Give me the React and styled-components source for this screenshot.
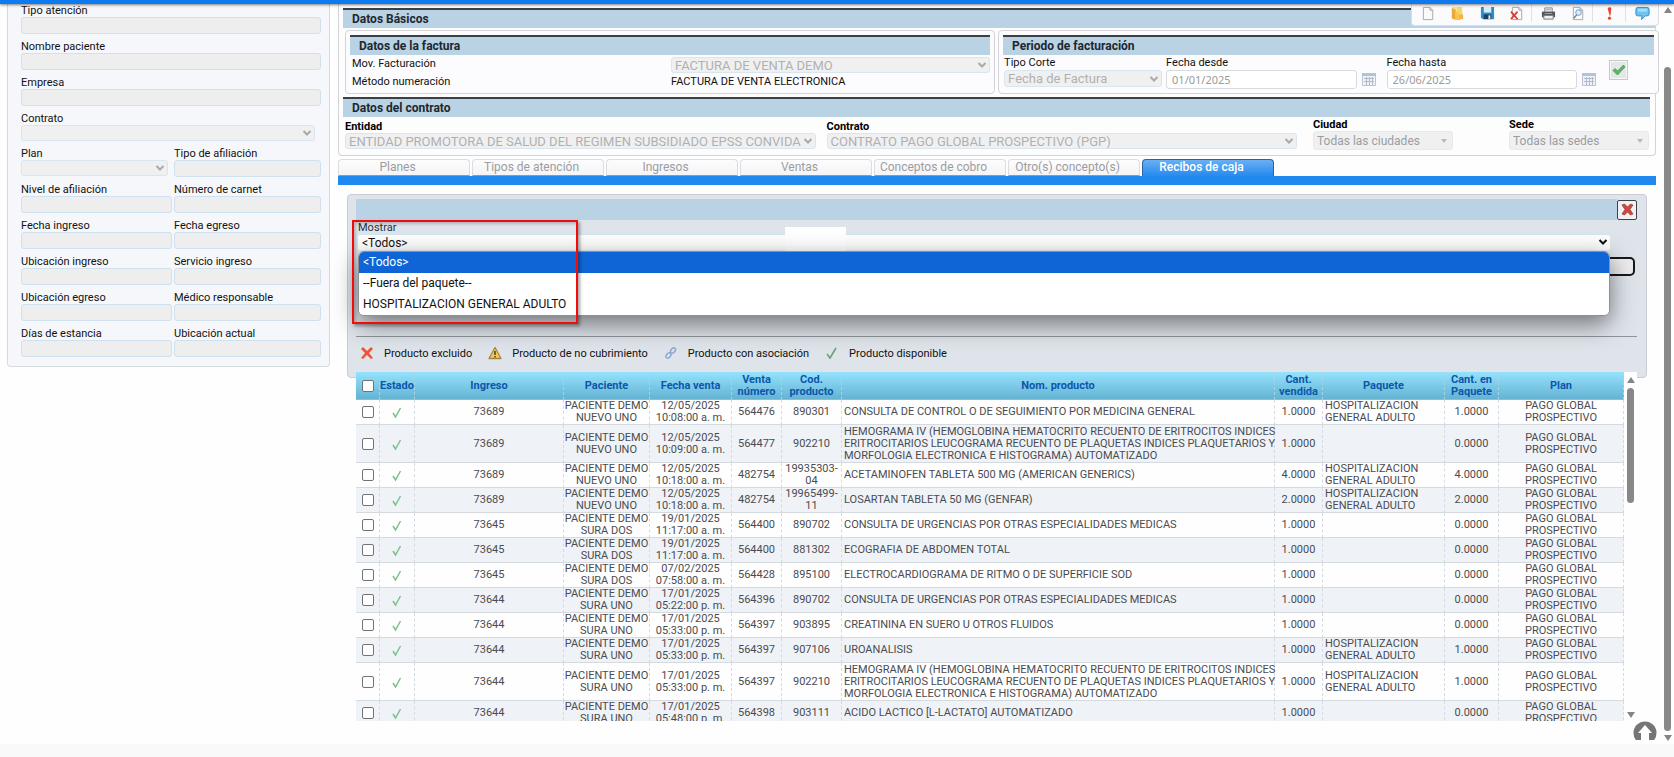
import React from "react";
import styled, { createGlobalStyle, css } from "styled-components";

const Global = createGlobalStyle`
  * { box-sizing: border-box; }
  body { margin: 0; background: #f9f9fa; font-family: Roboto, "Liberation Sans", sans-serif; font-size: 11px; color: #111; }
  input, select, button { font-family: inherit; margin: 0; }
  svg { display: block; flex: none; }
`;

const Page = styled.div`
  position: relative;
  min-height: 100vh;
  display: flex;
  flex-direction: column;
`;
const TopBar = styled.header`
  position: relative;
  z-index: 5;
  height: 4px;
  background: #0d7af0;
  box-shadow: 0 1px 3px rgba(0, 0, 0, 0.5);
`;
const Body = styled.div`
  flex: 1;
  display: flex;
  align-items: flex-start;
  background: #fefefe;
  position: relative;
`;
const Footer = styled.footer`
  height: 13px;
  background: #f9f9fa;
`;

/* Patient panel */
const PatientPanel = styled.aside`
  flex: none;
  width: 323px;
  margin: 0 8px 0 7px;
  padding: 0 8px 9px 13px;
  border: 1px solid #d6d9dd;
  border-top: 0;
  border-radius: 0 0 4px 4px;
  background: #f6f7fa;
  display: grid;
  grid-template-columns: 151px 147px;
  gap: 6px 2px;
`;
const Field = styled.label`
  grid-column: ${(p) => (p.$wide ? "1 / -1" : "auto")};
  display: flex;
  flex-direction: column;
  line-height: 13px;
  font-size: 11px;
`;
const PatientInput = styled.input`
  width: 100%;
  height: 17px;
  padding: 0 4px;
  border: 1px solid #cfe0ee;
  border-radius: 3px;
  background: #eeeeee;
`;

/* Select boxes */
const SelectBox = styled.span`
  position: relative;
  display: block;
  width: ${(p) => p.$width || "100%"};
  svg { position: absolute; right: ${(p) => (p.$caret ? "5px" : "3px")}; top: 50%; margin-top: -4px; pointer-events: none; }
`;
const SelectControl = styled.select`
  appearance: none;
  display: block;
  width: 100%;
  height: ${(p) => p.$height || "16px"};
  padding: 0 12px 0 3px;
  border: 1px solid ${(p) => (p.$caret ? "#e9e9ec" : "#d9e6ef")};
  border-radius: 3px;
  background: #f0f0f1;
  color: ${(p) => (p.$caret ? "#9a9da3" : "#b0b0b0")};
  font-size: ${(p) => p.$size || "13px"};
  opacity: 1;
`;

const Chevron = ({ color = "#a9a9a9" }) => (
  <svg width="10" height="8" viewBox="0 0 10 8" fill="none" stroke={color} strokeWidth="2">
    <path d="M1.5 2 5 5.5 8.5 2" />
  </svg>
);
const Caret = () => (
  <svg width="8" height="8" viewBox="0 0 8 8" fill="#b9b9bd"><path d="M1 2h6L4 6z" /></svg>
);
function Select({ value, width, height, size, caret, label }) {
  return (
    <SelectBox $width={width} $caret={caret}>
      <SelectControl disabled $height={height} $size={size} $caret={caret} aria-label={label} defaultValue={value}>
        <option>{value}</option>
      </SelectControl>
      {caret ? <Caret /> : <Chevron />}
    </SelectBox>
  );
}

/* Invoice area */
const Main = styled.main`
  flex: 1;
  min-width: 0;
`;
const BasicData = styled.section`
  margin-right: 5px;
  padding: 4px 0 5px 4px;
  border: 1px solid #d4d4d8;
  border-top: 0;
  border-radius: 0 0 4px 4px;
  background: #fdfdfe;
`;
const BarTitle = styled.h2`
  margin: 0 ${(p) => p.$right || "0"} 0 0;
  height: 20px;
  padding-left: 9px;
  border-top: 2px solid #3b4046;
  background: #b9d3e4;
  font-size: 12px;
  line-height: 19px;
  font-weight: 700;
  color: #1d2730;
`;
const CardRow = styled.div`
  display: flex;
  gap: 3px;
  margin: 2px -4px 3px 2px;
`;
const Card = styled.section`
  flex: ${(p) => p.$grow} 1 0;
  min-width: 0;
  height: 64px;
  padding: 4px;
  border: 1px solid #d4d4d8;
  border-radius: 4px;
  background: #fcfcfe;
`;
const InvoiceGrid = styled.div`
  display: grid;
  grid-template-columns: 1fr 1fr;
  grid-template-rows: 18px 18px;
  padding-left: 2px;
  font-size: 11px;
  line-height: 17px;
`;
const InvoiceSelect = styled.div`padding-top: 2px;`;
const PeriodRow = styled.div`
  display: flex;
  padding: 1px 26px 0 1px;
`;
const PeriodField = styled.label`
  flex: ${(p) => p.$flex};
  min-width: 0;
  font-size: 11px;
  line-height: 14px;
`;
const DateInput = styled.input`
  display: block;
  width: 100%;
  height: 19px;
  padding: 0 5px;
  border: 1px solid #d9dadd;
  border-radius: 3px;
  background: #fff;
  color: #9b9b9b;
  font-family: "Noto Sans", sans-serif;
  font-size: 11px;
`;
const IconButton = styled.button`
  flex: none;
  display: grid;
  place-items: center;
  padding: 0;
  border: 0;
  background: none;
`;
const CalendarButton = styled(IconButton)`
  width: 14px;
  height: 14px;
  margin: 16px 11px 0 5px;
`;
const AcceptButton = styled(IconButton)`
  width: 19px;
  height: 20px;
  margin: 4px 0 0 2px;
  border: 1px solid #c5c9ca;
  box-shadow: inset 0 0 0 1px #f7f7f7;
  background: #e4e7e7;
`;
const ContractRow = styled.div`
  display: flex;
  align-items: flex-start;
  padding: 1px 6px 0 2px;
`;
const ContractField = styled.label`
  flex: ${(p) => p.$flex};
  min-width: 0;
  margin-left: ${(p) => p.$left || "0"};
  padding-top: ${(p) => p.$top || "0"};
  font-size: 11px;
  font-weight: 700;
  line-height: 13px;
  color: #000;
`;

/* Tabs */
const Tabs = styled.nav`
  display: flex;
  gap: 2px;
  margin: 3px 5px 0 0;
  border-bottom: 9px solid #2089f0;
`;
const Tab = styled.button`
  height: 17px;
  flex: 0 1 132px;
  padding: 0 13px 0 0;
  border: 1px solid #dcdce0;
  border-bottom-color: #8c9bab;
  border-radius: 4px 4px 0 0;
  background: linear-gradient(#fdfdfe, #f4f4f6);
  color: #9c9ca0;
  font-size: 12px;
  line-height: 15px;
  white-space: nowrap;
  ${(p) =>
    p.$active &&
    css`
      border-color: #2a63a5;
      border-bottom-color: #2a8cef;
      background: linear-gradient(#6ab0f3, #2a8cef);
      color: #fff;
      font-weight: 500;
    `}
`;

/* Receipt panel */
const ReceiptPanel = styled.section`
  position: relative;
  z-index: 2;
  margin: 9px 14px 0 9px;
  height: 184px;
  padding: 4px 9px 0 8px;
  border: 1px solid #c9cdd3;
  border-radius: 4px;
  background: #dfe4eb;
`;
const PanelHead = styled.div`
  display: flex;
  align-items: center;
  height: 21px;
`;
const PanelBar = styled.div`
  flex: 1;
  height: 21px;
  background: #b9d3e4;
`;
const CloseButton = styled(IconButton)`
  width: 20px;
  height: 20px;
  border: 1px solid #3d4148;
  border-radius: 2px;
  background: #f1f1f4;
`;
const ShowField = styled.div`
  position: relative;
  margin: 0 27px 0 2px;
`;
const ShowLabel = styled.label`
  display: block;
  font-size: 11px;
  line-height: 15px;
  color: #26313b;
`;
const ShowSelect = styled.select`
  appearance: none;
  display: block;
  width: 100%;
  height: 15px;
  padding: 0 4px;
  border: 0;
  border-radius: 2px;
  box-shadow: 0 -1px #d2e6f2, 0 1px #e4eef5;
  background: #fdfdfd;
  color: #111;
  font-size: 12px;
`;
const ShowChevron = styled.span`
  position: absolute;
  right: 2px;
  top: 18px;
  pointer-events: none;
`;
const BlankPatch = styled.span`
  position: absolute;
  left: 34.1%;
  top: 7px;
  width: 61px;
  height: 24px;
  background: #fff;
`;
const Options = styled.ul`
  position: absolute;
  z-index: 3;
  top: 31px;
  left: 0;
  right: 0;
  margin: 0;
  padding: 0;
  list-style: none;
  border: 1px solid #8d9096;
  border-radius: 6px;
  background: #fff;
  overflow: hidden;
  box-shadow: 0 8px 24px rgba(0, 0, 0, 0.5);
`;
const Option = styled.li`
  height: 21px;
  padding-left: 4px;
  font-size: 12px;
  line-height: 21px;
  color: ${(p) => (p.$active ? "#fff" : "#111")};
  background: ${(p) => (p.$active ? "#0f64d6" : "#fff")};
`;
const Highlight = styled.div`
  position: absolute;
  z-index: 4;
  top: 0;
  left: -6px;
  width: 226px;
  height: 104px;
  border: 2px solid #f50a0a;
  box-shadow: 2px 2px 3px rgba(0, 0, 0, 0.35), inset 2px 2px 3px rgba(0, 0, 0, 0.2);
  pointer-events: none;
`;
const WideButton = styled.button`
  display: block;
  width: calc(100% - 4px);
  height: 19px;
  margin: 7px 0 60px 2px;
  border: 2px solid #16181b;
  border-radius: 5px;
  background: #ececee;
`;
const Legend = styled.div`
  display: flex;
  align-items: center;
  height: 33px;
  padding-left: 4px;
  border-top: 1px solid #8f949a;
`;
const LegendItem = styled.span`
  display: flex;
  align-items: center;
  gap: 10px;
  margin-right: 16px;
  font-size: 11px;
  color: #111;
`;

/* Product table */
const TableArea = styled.div`
  position: relative;
  z-index: 2;
  display: flex;
  height: calc(100vh - 408px);
  min-height: 120px;
  margin: -6px 24px 23px 18px;
  overflow: hidden;
  background: #fefefe;
`;
const TableClip = styled.div`
  flex: 1;
  min-width: 0;
  overflow: hidden;
`;
const Table = styled.table`
  width: 100%;
  table-layout: fixed;
  border-collapse: separate;
  border-spacing: 0;
`;
const Th = styled.th`
  height: 28px;
  padding: 0;
  border-right: 1px dashed #a9d3e4;
  border-bottom: 1px solid #a2b8c4;
  background: linear-gradient(#95e2fd, #64b3d2);
  color: #0b57ac;
  font-size: 11px;
  line-height: 12px;
  font-weight: 700;
`;
const Tr = styled.tr`
  height: ${(p) => (p.$tall ? "38px" : "25px")};
  background: ${(p) => (p.$odd ? "#eff3f8" : "#fefefe")};
`;
const Td = styled.td`
  padding: 0 0 0 ${(p) => (p.$left ? "2px" : "0")};
  border-right: 1px dashed #d3dbe0;
  border-bottom: 1px solid #d5dade;
  text-align: ${(p) => (p.$left ? "left" : "center")};
  color: #4b4b4f;
  font-size: 11px;
  line-height: 12px;
  white-space: pre;
  svg { margin: 0 auto; }
`;
const Check = styled.input`
  appearance: none;
  display: block;
  width: 12px;
  height: 12px;
  && { margin: 0 auto; }
  border: 1px solid #6f7378;
  border-radius: 2px;
  background: #fff;
`;

/* Scrollbars */
const Scroll = styled.div`
  flex: none;
  align-self: stretch;
  width: 13px;
  display: flex;
  flex-direction: column;
  align-items: center;
  justify-content: space-between;
  padding: ${(p) => p.$pad};
`;
const Track = styled.div`
  flex: 1;
  width: 7px;
  padding-top: ${(p) => p.$offset};
  margin: 4px 0;
`;
const Thumb = styled.div`
  width: 7px;
  height: ${(p) => p.$height};
  border-radius: 4px;
  background: #888;
`;
const Arrow = ({ down }) => (
  <svg width="8" height="6" viewBox="0 0 8 6" fill="#858585">
    <path d={down ? "M0 0h8L4 6z" : "M0 6h8L4 0z"} />
  </svg>
);

const Toolbar = styled.div`
  position: absolute;
  z-index: 4;
  right: 15px;
  top: 0;
  width: 248px;
  height: 22px;
  display: flex;
  align-items: flex-start;
  padding-left: 1px;
  border: 1px solid #dedee2;
  border-top: 0;
  border-radius: 0 0 4px 4px;
  background: #fbfbfd;
`;
const ToolButton = styled(IconButton)`
  width: ${(p) => p.$width || "30px"};
  height: 18px;
  border-left: ${(p) => (p.$divided ? "1px solid #e2e2e6" : "0")};
`;
const TopLink = styled.a`
  position: absolute;
  z-index: 4;
  right: 17px;
  bottom: 4px;
  height: 19px;
  overflow: hidden;
`;

const page = <path d="M2.500 1.500h7l3 3v10h-10zM9.500 1.500v3h3" fill="#fafafa" stroke="#a5a5aa" />;
const TOOLS = [
  ["Nuevo", <>{page}</>, "31px"],
  ["Abrir", <><path d="M2 1h7l2 1v12H2z" fill="#fbe08e" /><path d="M8 1h5v9H8z" fill="#f9d36b" /><path d="M2 2l4 2v11l-4-2z" fill="#e8a93a" /><path d="M6 6h2l3 4v5H6z" fill="#f8c650" /><path d="M10 9h4v5h-4z" fill="#f1b540" /></>, "26px"],
  ["Guardar", <><path d="M1 1h14v13H3l-2-2z" fill="#2b8cc8" /><path d="M4 1h8v6H4z" fill="#dcecf6" /><path d="M4 9h8v5H4z" fill="#16415f" /><path d="M9 10h2v4H9z" fill="#e8eef2" /></>, "34px"],
  ["Eliminar", <>{page}<path d="M1 6l7 8M8 6l-7 8" stroke="#dc3b2a" strokeWidth="1.800" /></>, "27px"],
  ["Imprimir", <><path d="M4 2h8v5H4z" fill="#e9e9e9" stroke="#85898d" /><path d="M1 6h14v6H1z" fill="#50565b" /><path d="M3 10h10v4H3z" fill="#f0f0f0" stroke="#777" /><path d="M5 4h6M4 8h8" stroke="#9fa4a8" /></>, "33px", true],
  ["Vista previa", <>{page}<circle cx="8" cy="7" r="3" fill="#d8ecfa" stroke="#6c9cc4" /><path d="M6 9.500l-3 3.500" stroke="#6c7d8c" strokeWidth="1.500" /></>, "28px"],
  ["Alerta", <><path d="M6 2.500C7 1 10 1 10 3l-1 7H8z" fill="#e4492d" /><circle cx="8" cy="13" r="1.700" fill="#e4492d" /></>, "33px", true],
  ["Mensajes", <><path d="M3 1.500h10a2 2 0 0 1 2 2v5a2 2 0 0 1-2 2h-2l-4 4 .500-4H3a2 2 0 0 1-2-2v-5a2 2 0 0 1 2-2z" fill="#6cc3f2" stroke="#3488c0" /><path d="M3 3h10v3H3z" fill="#a6defa" /></>, "33px", true],
];

const Calendar = () => (
  <svg width="14" height="14" viewBox="0 0 14 14">
    <path d="M.5 1.500h13v12H.5z" fill="#eef2f8" stroke="#b9c4d4" />
    <path d="M0 1h14v3H0z" fill="#b4c2d6" />
    <path d="M2 6.500h10M2 9.500h10M4.500 5v8M7.500 5v8M10.500 5v8" stroke="#b0bccd" />
  </svg>
);
const Accept = () => (
  <svg width="14" height="14" viewBox="0 0 14 14"><path d="M1 7.500 3 5.500 5.500 8 11.500 2 13 4 5.500 12z" fill="#5cb85c" stroke="#3f8f48" strokeWidth=".7" /></svg>
);
const Close = () => (
  <svg width="13" height="13" viewBox="0 0 13 13"><path d="M1 2 3.500 1 6.500 4 9.500 1 12 2 9 6.500 12 11 9.500 12 6.500 9 3.500 12 1 11 4 6.500z" fill="#d2473d" stroke="#8c3a38" strokeWidth=".7" /></svg>
);
const Tick = () => (
  <svg width="12" height="14" viewBox="0 0 12 14" fill="none"><path d="M2 8l2.500 4L9.500 3" stroke="#7dc08c" strokeWidth="1.500" /></svg>
);
const LEGEND = [
  ["Producto excluido", <path d="M1 3l2-2 4 4 4-4 2 2-4 4 4 5-2 1-4-4-4 4-2-1 4-5z" fill="#f1533a" />],
  ["Producto de no cubrimiento", <><path d="M7 1.500 13 12.500H1z" fill="#fbc948" stroke="#a5844a" strokeLinejoin="round" strokeWidth="1.300" /><path d="M7 5v4M7 10v1.500" stroke="#4a3d20" strokeWidth="1.500" /></>],
  ["Producto con asociación", <g fill="none" stroke="#86a8d4" strokeWidth="1.500"><ellipse cx="4.500" cy="9.500" rx="2" ry="3" transform="rotate(40 4.500 9.500)" /><ellipse cx="9" cy="4.500" rx="2" ry="3" transform="rotate(40 9 4.500)" /></g>],
  ["Producto disponible", <path d="M2 8l3 4 6-10" fill="none" stroke="#6da279" strokeWidth="1.600" />],
];

const PATIENT = [
  ["Tipo atención", "wide"], ["Nombre paciente", "wide"], ["Empresa", "wide"], ["Contrato", "wide", "294px"],
  ["Plan", "", "147px"], ["Tipo de afiliación"], ["Nivel de afiliación"], ["Número de carnet"], ["Fecha ingreso"], ["Fecha egreso"],
  ["Ubicación ingreso"], ["Servicio ingreso"], ["Ubicación egreso"], ["Médico responsable"], ["Días de estancia"], ["Ubicación actual"],
];
const TABS = ["Planes", "Tipos de atención", "Ingresos", "Ventas", "Conceptos de cobro", "Otro(s) concepto(s)", "Recibos de caja"];
const COLUMNS = [
  ["", 24], ["Estado", 35], ["Ingreso", "149"], ["Paciente", 86], ["Fecha venta", 82], ["Venta\nnúmero", 50], ["Cod.\nproducto", 60],
  ["Nom. producto"], ["Cant.\nvendida", 48], ["Paquete", 122], ["Cant. en\nPaquete", 54], ["Plan", 125],
];
const HEMO = "HEMOGRAMA IV (HEMOGLOBINA HEMATOCRITO RECUENTO DE ERITROCITOS INDICES\nERITROCITARIOS LEUCOGRAMA RECUENTO DE PLAQUETAS INDICES PLAQUETARIOS Y\nMORFOLOGIA ELECTRONICA E HISTOGRAMA) AUTOMATIZADO";
const ROWS = [
  ["73689", "NUEVO UNO", "12/05/2025", "10:08:00 a. m.", "564476", "890301", "CONSULTA DE CONTROL O DE SEGUIMIENTO POR MEDICINA GENERAL", "1.0000", true, "1.0000"],
  ["73689", "NUEVO UNO", "12/05/2025", "10:09:00 a. m.", "564477", "902210", HEMO, "1.0000", false, "0.0000"],
  ["73689", "NUEVO UNO", "12/05/2025", "10:18:00 a. m.", "482754", "19935303-\n04", "ACETAMINOFEN TABLETA 500 MG (AMERICAN GENERICS)", "4.0000", true, "4.0000"],
  ["73689", "NUEVO UNO", "12/05/2025", "10:18:00 a. m.", "482754", "19965499-\n11", "LOSARTAN TABLETA 50 MG (GENFAR)", "2.0000", true, "2.0000"],
  ["73645", "SURA DOS", "19/01/2025", "11:17:00 a. m.", "564400", "890702", "CONSULTA DE URGENCIAS POR OTRAS ESPECIALIDADES MEDICAS", "1.0000", false, "0.0000"],
  ["73645", "SURA DOS", "19/01/2025", "11:17:00 a. m.", "564400", "881302", "ECOGRAFIA DE ABDOMEN TOTAL", "1.0000", false, "0.0000"],
  ["73645", "SURA DOS", "07/02/2025", "07:58:00 a. m.", "564428", "895100", "ELECTROCARDIOGRAMA DE RITMO O DE SUPERFICIE SOD", "1.0000", false, "0.0000"],
  ["73644", "SURA UNO", "17/01/2025", "05:22:00 p. m.", "564396", "890702", "CONSULTA DE URGENCIAS POR OTRAS ESPECIALIDADES MEDICAS", "1.0000", false, "0.0000"],
  ["73644", "SURA UNO", "17/01/2025", "05:33:00 p. m.", "564397", "903895", "CREATININA EN SUERO U OTROS FLUIDOS", "1.0000", false, "0.0000"],
  ["73644", "SURA UNO", "17/01/2025", "05:33:00 p. m.", "564397", "907106", "UROANALISIS", "1.0000", true, "1.0000"],
  ["73644", "SURA UNO", "17/01/2025", "05:33:00 p. m.", "564397", "902210", HEMO, "1.0000", true, "1.0000"],
  ["73644", "SURA UNO", "17/01/2025", "05:48:00 p. m.", "564398", "903111", "ACIDO LACTICO [L-LACTATO] AUTOMATIZADO", "1.0000", false, "0.0000"],
];

export default function App() {
  return (
    <Page>
      <Global />
      <TopBar />
      <Body>
        <PatientPanel>
          {PATIENT.map(([label, wide, select]) => (
            <Field key={label} $wide={wide}>
              {label}
              {select ? <Select value="" width={select} label={label} /> : <PatientInput disabled />}
            </Field>
          ))}
        </PatientPanel>
        <Main>
          <BasicData>
            <BarTitle>Datos Básicos</BarTitle>
            <CardRow>
              <Card $grow={650}>
                <BarTitle>Datos de la factura</BarTitle>
                <InvoiceGrid>
                  <span>Mov. Facturación</span>
                  <InvoiceSelect><Select value="FACTURA DE VENTA DEMO" label="Mov. Facturación" /></InvoiceSelect>
                  <span>Método numeración</span>
                  <span>FACTURA DE VENTA ELECTRONICA</span>
                </InvoiceGrid>
              </Card>
              <Card $grow={661}>
                <BarTitle>Periodo de facturación</BarTitle>
                <PeriodRow>
                  <PeriodField $flex="0 1 162px">Tipo Corte<Select value="Fecha de Factura" width="158px" height="17px" label="Tipo Corte" /></PeriodField>
                  <PeriodField $flex="1">Fecha desde<DateInput disabled defaultValue="01/01/2025" /></PeriodField>
                  <CalendarButton aria-label="Calendario desde"><Calendar /></CalendarButton>
                  <PeriodField $flex="1">Fecha hasta<DateInput disabled defaultValue="26/06/2025" /></PeriodField>
                  <CalendarButton aria-label="Calendario hasta"><Calendar /></CalendarButton>
                  <AcceptButton aria-label="Aceptar"><Accept /></AcceptButton>
                </PeriodRow>
              </Card>
            </CardRow>
            <BarTitle $right="5px">Datos del contrato</BarTitle>
            <ContractRow>
              <ContractField $flex="1" $top="2px">Entidad<Select value="ENTIDAD PROMOTORA DE SALUD DEL REGIMEN SUBSIDIADO EPSS CONVIDA" label="Entidad" /></ContractField>
              <ContractField $flex="1" $left="11px" $top="2px">Contrato<Select value="CONTRATO PAGO GLOBAL PROSPECTIVO (PGP)" label="Contrato" /></ContractField>
              <ContractField $flex="0 0 140px" $left="16px">Ciudad<Select value="Todas las ciudades" height="19px" size="12px" caret label="Ciudad" /></ContractField>
              <ContractField $flex="0 0 140px" $left="56px">Sede<Select value="Todas las sedes" height="19px" size="12px" caret label="Sede" /></ContractField>
            </ContractRow>
          </BasicData>
          <Tabs>
            {TABS.map((t, i) => <Tab key={t} $active={i === 6}>{t}</Tab>)}
          </Tabs>
          <ReceiptPanel>
            <PanelHead>
              <PanelBar />
              <CloseButton aria-label="Cerrar"><Close /></CloseButton>
            </PanelHead>
            <ShowField>
              <ShowLabel htmlFor="mostrar">Mostrar</ShowLabel>
              <ShowSelect id="mostrar" defaultValue="<Todos>"><option>{"<Todos>"}</option></ShowSelect>
              <ShowChevron><Chevron color="#111" /></ShowChevron>
              <BlankPatch />
              <Options role="listbox">
                <Option role="option" aria-selected="true" $active>{"<Todos>"}</Option>
                <Option role="option" aria-selected="false">--Fuera del paquete--</Option>
                <Option role="option" aria-selected="false">HOSPITALIZACION GENERAL ADULTO</Option>
              </Options>
              <Highlight />
            </ShowField>
            <WideButton aria-label="Buscar" />
            <Legend>
              {LEGEND.map(([label, icon]) => (
                <LegendItem key={label}><svg width="14" height="14" viewBox="0 0 14 14">{icon}</svg>{label}</LegendItem>
              ))}
            </Legend>
          </ReceiptPanel>
          <TableArea>
            <TableClip>
              <Table>
                <colgroup>{COLUMNS.map(([n, w]) => <col key={n} width={w} />)}</colgroup>
                <thead>
                  <tr>
                    {COLUMNS.map(([n]) => <Th key={n}>{n || <Check type="checkbox" aria-label="Seleccionar todo" />}</Th>)}
                  </tr>
                </thead>
                <tbody>
                  {ROWS.map((r, i) => (
                    <Tr key={i} $odd={i % 2 === 1} $tall={r[6] === HEMO}>
                      <Td><Check type="checkbox" aria-label={"Seleccionar " + r[4]} /></Td>
                      <Td><Tick /></Td>
                      <Td>{r[0]}</Td>
                      <Td>{"PACIENTE DEMO\n" + r[1]}</Td>
                      <Td>{r[2] + "\n" + r[3]}</Td>
                      <Td>{r[4]}</Td>
                      <Td>{r[5]}</Td>
                      <Td $left>{r[6]}</Td>
                      <Td>{r[7]}</Td>
                      <Td $left>{r[8] ? "HOSPITALIZACION\nGENERAL ADULTO" : ""}</Td>
                      <Td>{r[9]}</Td>
                      <Td>{"PAGO GLOBAL\nPROSPECTIVO"}</Td>
                    </Tr>
                  ))}
                </tbody>
              </Table>
            </TableClip>
            <Scroll $pad="5px 0 3px">
              <Arrow />
              <Track $offset="1px"><Thumb $height="36%" /></Track>
              <Arrow down />
            </Scroll>
          </TableArea>
        </Main>
        <Scroll $pad="3px 0 3px">
          <Arrow />
          <Track $offset="50px"><Thumb $height="100%" /></Track>
          <Arrow down />
        </Scroll>
        <Toolbar>
          {TOOLS.map(([label, icon, width, divided]) => (
            <ToolButton key={label} aria-label={label} $width={width} $divided={divided}>
              <svg width="15" height="15" viewBox="0 0 16 16" fill="none">{icon}</svg>
            </ToolButton>
          ))}
        </Toolbar>
        <TopLink href="#" aria-label="Subir">
          <svg width="24" height="24" viewBox="0 0 24 24"><circle cx="12" cy="12" r="11.500" fill="#757575" /><path d="M12 4 19 12h-3v7H8v-7H5z" fill="#fff" /></svg>
        </TopLink>
      </Body>
      <Footer />
    </Page>
  );
}
